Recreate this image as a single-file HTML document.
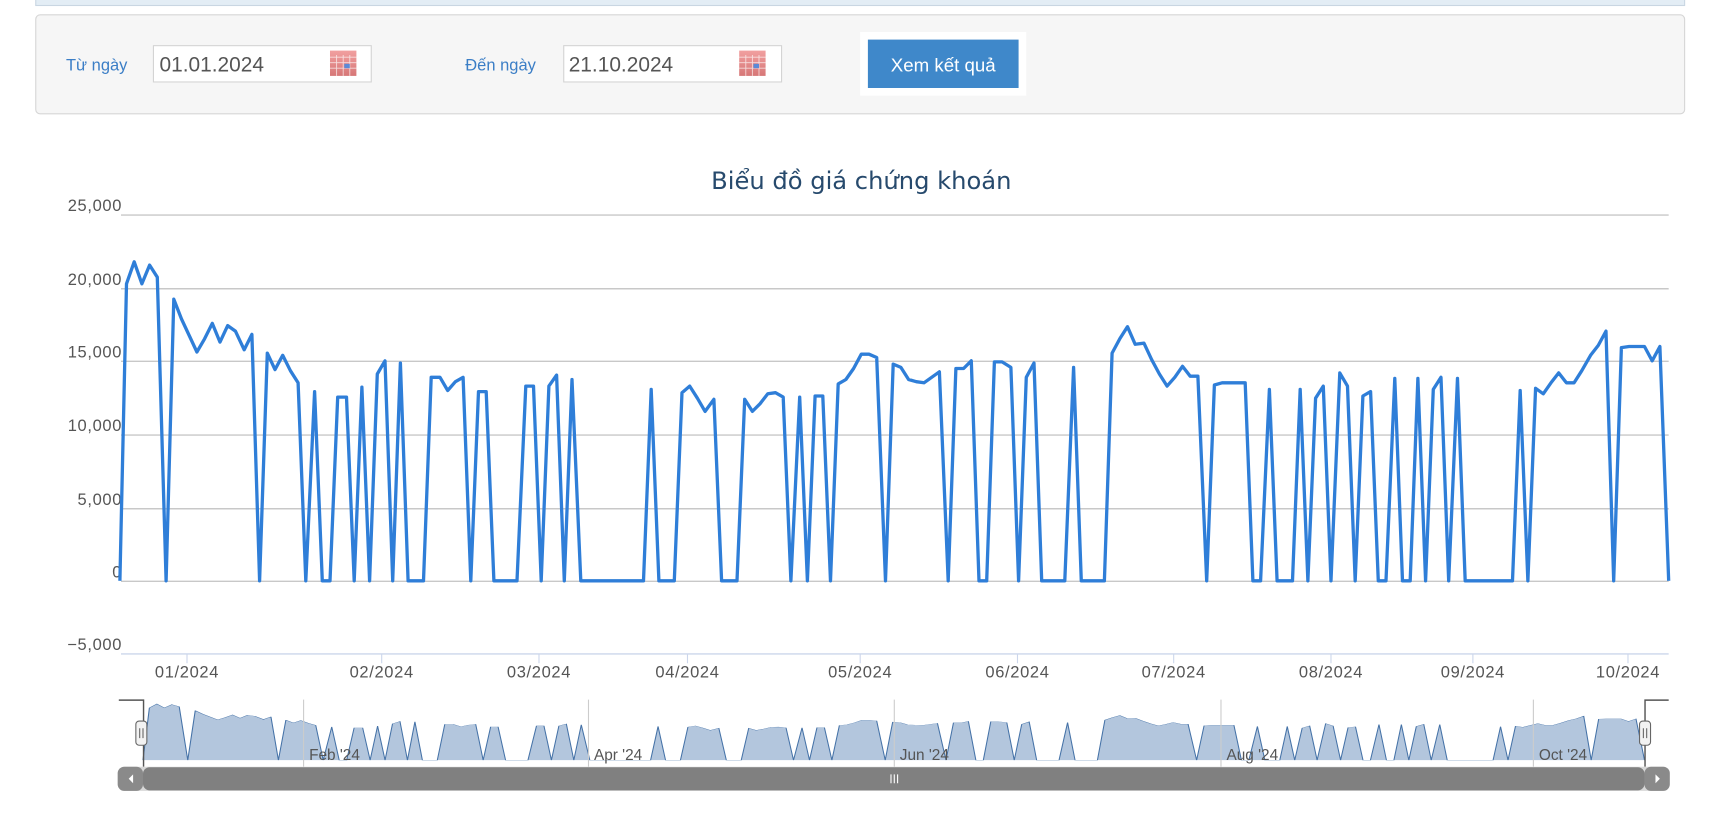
<!DOCTYPE html>
<html><head><meta charset="utf-8"><style>
html,body{margin:0;padding:0;background:#fff;width:1725px;height:813px;overflow:hidden}
svg{display:block}
text{font-family:"Liberation Sans","DejaVu Sans",sans-serif}
.dj{font-family:"DejaVu Sans",sans-serif}
</style></head><body>
<svg width="1725" height="813" viewBox="0 0 1568.2 739.1" xmlns="http://www.w3.org/2000/svg">
<defs>
<path id="ln" d="M109,528 L115,258 122,238 129,258 136,241 143,252 151,528 158,272 165,290 172,305 179,320 186,308 193,294 200,311 207,296 214,301 222,318 229,304 236,528 243,321 250,336 257,323 264,337 271,348 278,528 286,356 293,528 300,528 307,361 315,361 322,528 329,352 336,528 343,340 350,328 357,528 364,330 371,528 385,528 392,343 400,343 407,355 414,347 421,343 428,528 435,356 442,356 449,528 470,528 478,351 485,351 492,528 499,351 506,341 513,528 520,345 528,528 585,528 592,354 599,528 613,528 620,357 627,351 634,362 641,374 649,363 656,528 670,528 677,363 684,374 691,367 698,358 705,357 712,361 719,528 727,361 734,528 741,360 748,360 755,528 762,349 769,345 776,335 783,322 790,322 797,325 805,528 812,331 819,334 826,345 833,347 840,348 847,343 854,338 862,528 869,335 876,335 883,328 890,528 897,528 904,329 911,329 919,334 926,528 933,343 940,330 947,528 968,528 976,334 983,528 1004,528 1011,321 1018,308 1025,297 1032,313 1040,312 1047,327 1054,340 1061,351 1068,343 1075,333 1082,342 1089,342 1097,528 1104,350 1111,348 1132,348 1139,528 1146,528 1154,354 1161,528 1175,528 1182,354 1189,528 1196,362 1203,351 1210,528 1218,339 1225,351 1232,528 1239,360 1246,356 1253,528 1260,528 1268,344 1275,528 1282,528 1289,344 1296,528 1303,354 1310,343 1317,528 1325,344 1332,528 1375,528 1382,355 1389,528 1396,353 1403,358 1410,348 1417,339 1424,348 1431,348 1438,337 1446,323 1453,314 1460,301 1467,528 1474,316 1481,315 1495,315 1502,328 1509,315 1517,528"/>
<linearGradient id="cal" x1="0" y1="0" x2="0" y2="1"><stop offset="0" stop-color="#e88"/><stop offset="1" stop-color="#c55"/></linearGradient>
</defs>
<rect x="32.5" y="-2" width="1499" height="7" fill="#e3edf5" stroke="#c9d6e2"/>
<rect x="32.5" y="13.5" width="1499" height="90" rx="4" fill="#f6f6f6" stroke="#d6d6d6"/>
<text x="60" y="64" font-size="15" fill="#3b7ec6">Từ ngày</text>
<rect x="139.5" y="41.5" width="198" height="33" fill="#fff" stroke="#d4d4d4"/>
<text x="145" y="65" font-size="19" fill="#555">01.01.2024</text>
<rect x="300" y="46" width="24" height="23" fill="url(#cal)" opacity=".8"/>
<g stroke="#fff" stroke-width=".8" opacity=".7"><path d="M300,52H324M300,57H324M300,62H324M306,50V69M312,50V69M318,50V69"/></g>
<rect x="313" y="58" width="5" height="4" fill="#5a8ad8"/>
<text x="423" y="64" font-size="15" fill="#3b7ec6">Đến ngày</text>
<rect x="512.5" y="41.5" width="198" height="33" fill="#fff" stroke="#d4d4d4"/>
<text x="517" y="65" font-size="19" fill="#555">21.10.2024</text>
<rect x="672" y="46" width="24" height="23" fill="url(#cal)" opacity=".8"/>
<g stroke="#fff" stroke-width=".8" opacity=".7"><path d="M672,52H696M672,57H696M672,62H696M678,50V69M684,50V69M690,50V69"/></g>
<rect x="685" y="58" width="5" height="4" fill="#5a8ad8"/>
<rect x="782" y="29" width="151" height="58" fill="#fff"/>
<rect x="789" y="36" width="137" height="44" fill="#3f88ca"/>
<text x="857.5" y="65" font-size="17" fill="#fff" text-anchor="middle">Xem kết quả</text>
<text class="dj" x="783" y="172" font-size="22" fill="#274a6d" text-anchor="middle">Biểu đồ giá chứng khoán</text>
<g stroke="#c8c8c8" stroke-width="1.3">
<path d="M110,195.5H1517M110,262.5H1517M110,328.5H1517M110,395.5H1517M110,462.5H1517M110,528.5H1517"/>
</g>
<path d="M110,594.5H1517" stroke="#ccd6eb" stroke-width="1.3"/>
<g class="dj" font-size="15" letter-spacing="0.6" fill="#555" text-anchor="end">
<text x="111" y="192">25,000</text><text x="111" y="259">20,000</text><text x="111" y="325">15,000</text><text x="111" y="392">10,000</text><text x="111" y="459">5,000</text><text x="111" y="525">0</text><text x="111" y="591">−5,000</text>
</g>
<g stroke="#ccd6eb" stroke-width="1"><path d="M170,595v8M347,595v8M490,595v8M625,595v8M782,595v8M925,595v8M1067,595v8M1210,595v8M1339,595v8M1480,595v8"/></g>
<g class="dj" font-size="15" letter-spacing="0.6" fill="#555" text-anchor="middle">
<text x="170" y="616">01/2024</text><text x="347" y="616">02/2024</text><text x="490" y="616">03/2024</text><text x="625" y="616">04/2024</text><text x="782" y="616">05/2024</text><text x="925" y="616">06/2024</text><text x="1067" y="616">07/2024</text><text x="1210" y="616">08/2024</text><text x="1339" y="616">09/2024</text><text x="1480" y="616">10/2024</text>
</g>
<use href="#ln" fill="none" stroke="#2f7ed8" stroke-width="3" stroke-linejoin="round"/>
<g transform="matrix(0.9695 0 0 0.176 24.3 598.1)">
<use href="#ln" fill="#b3c6dd" stroke="#4572a7" stroke-width="1" vector-effect="non-scaling-stroke"/>
</g>
<g stroke="#ccc" stroke-width="1"><path d="M276,636V697M535,636V697M813,636V697M1110,636V697M1394,636V697"/></g>
<g class="dj" font-size="14" fill="#555">
<text x="281" y="691">Feb '24</text><text x="540" y="691">Apr '24</text><text x="818" y="691">Jun '24</text><text x="1115" y="691">Aug '24</text><text x="1399" y="691">Oct '24</text>
</g>
<path d="M108,636.5H130.5V697M1517,636.5H1495.5V697" fill="none" stroke="#555" stroke-width="1.3"/>
<rect x="123.5" y="655.5" width="10" height="22" rx="3" fill="#f2f2f2" stroke="#666"/>
<path d="M127,662v9M130,662v9" stroke="#666"/>
<rect x="1490.5" y="655.5" width="10" height="22" rx="3" fill="#f2f2f2" stroke="#666"/>
<path d="M1494,662v9M1497,662v9" stroke="#666"/>
<rect x="107" y="697" width="1411" height="22" rx="6" fill="#d8d8d8"/>
<rect x="107" y="697" width="23" height="22" rx="6" fill="#8a8a8a"/>
<rect x="1495" y="697" width="23" height="22" rx="6" fill="#8a8a8a"/>
<rect x="130" y="697.5" width="1365" height="21" rx="6" fill="#808080"/>
<path d="M121,704l-4,4 4,4z" fill="#fff"/>
<path d="M1505,704l4,4-4,4z" fill="#fff"/>
<path d="M810,704v8M813,704v8M816,704v8" stroke="#fff" stroke-width="1"/>
</svg>
</body></html>
